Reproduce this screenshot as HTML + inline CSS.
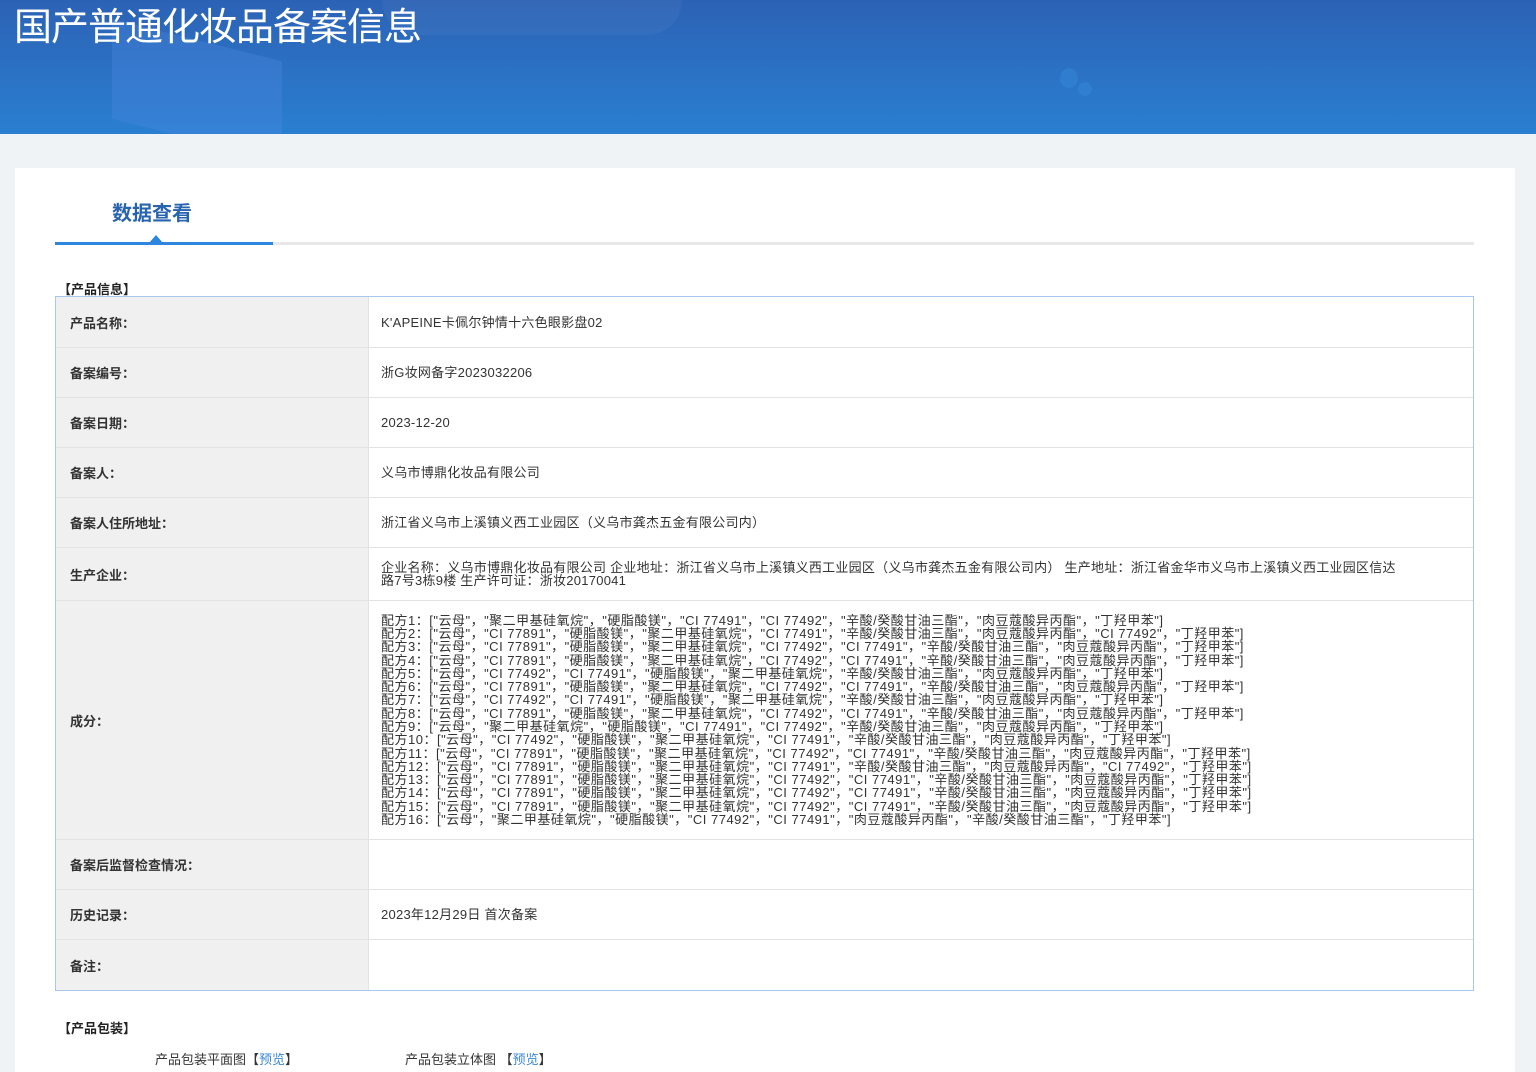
<!DOCTYPE html>
<html><head><meta charset="utf-8"><style>
*{margin:0;padding:0;box-sizing:border-box}
body{width:1536px;height:1072px;overflow:hidden;background:#eff3f6;font-family:"Liberation Sans","Noto Sans CJK SC",sans-serif;color:#333;position:relative}
.hdr{position:absolute;left:0;top:0;width:1536px;height:134px;background:linear-gradient(180deg,#2c62b5,#2a7fd1);overflow:hidden}
.hdr .s1{position:absolute;left:112px;top:40px;width:170px;height:100px;background:rgba(80,140,230,.3);transform:skewY(14deg)}
.hdr .c1{position:absolute;left:382px;top:0;width:300px;height:35px;border-radius:0 0 80px 80px;background:rgba(255,255,255,.04)}
.hdr .b1{position:absolute;left:1060px;top:68px;width:18px;height:20px;border-radius:50%;background:rgba(60,150,230,.3)}
.hdr .b2{position:absolute;left:1078px;top:82px;width:14px;height:14px;border-radius:50%;background:rgba(60,150,230,.3)}
.hdr h1{position:absolute;left:14px;top:-4px;font-size:38px;font-weight:normal;color:#fff;letter-spacing:-1px}
.panel{position:absolute;left:15px;top:168px;width:1500px;height:904px;background:#fff}
.tab{position:absolute;left:112px;top:197px;font-size:20px;font-weight:bold;color:#2864ae}
.line{position:absolute;left:55px;top:242px;width:1419px;height:3px;background:#e8e8e8}
.line2{position:absolute;left:55px;top:242px;width:218px;height:3px;background:#2e86de}
.tri{position:absolute;left:149px;top:235px;width:0;height:0;border-left:7px solid transparent;border-right:7px solid transparent;border-bottom:8px solid #2e86de}
.sec{position:absolute;font-size:13px;font-weight:bold;color:#222}
.tbl{position:absolute;left:55px;top:296px;width:1419px;height:695px;border:1px solid #a9c6ec;background:#fff}
.row{position:absolute;left:0;width:1417px;border-bottom:1px solid #e3e3e3;font-size:13px}
.lab{position:absolute;left:0;top:0;bottom:0;width:313px;background:#f0f0f0;border-right:1px solid #e3e3e3;font-weight:bold;color:#333;display:flex;align-items:center;padding-left:14px}
.val{position:absolute;left:325px;right:66px;top:0;bottom:0;display:flex;align-items:center;color:#333;line-height:13px;letter-spacing:0.25px}
.ing{font-size:13px;line-height:13.3px;white-space:nowrap;letter-spacing:0.5px}
.pk{position:absolute;top:1049px;font-size:13px;color:#333}
.pk b{font-weight:normal;color:#3a87d8}
</style></head><body>
<div class="hdr"><div class="s1"></div><div class="c1"></div><div class="b1"></div><div class="b2"></div><h1>国产普通化妆品备案信息</h1></div>
<div class="panel"></div>
<div class="tab">数据查看</div>
<div class="line"></div><div class="line2"></div><div class="tri"></div>
<div class="sec" style="left:58px;top:279px">【产品信息】</div>
<div class="tbl">
<div class="row" style="top:0;height:51px"><div class="lab">产品名称：</div><div class="val">K'APEINE卡佩尔钟情十六色眼影盘02</div></div>
<div class="row" style="top:51px;height:50px"><div class="lab">备案编号：</div><div class="val">浙G妆网备字2023032206</div></div>
<div class="row" style="top:101px;height:50px"><div class="lab">备案日期：</div><div class="val">2023-12-20</div></div>
<div class="row" style="top:151px;height:50px"><div class="lab">备案人：</div><div class="val">义乌市博鼎化妆品有限公司</div></div>
<div class="row" style="top:201px;height:50px"><div class="lab">备案人住所地址：</div><div class="val">浙江省义乌市上溪镇义西工业园区（义乌市龚杰五金有限公司内）</div></div>
<div class="row" style="top:251px;height:53px"><div class="lab">生产企业：</div><div class="val">企业名称：义乌市博鼎化妆品有限公司 企业地址：浙江省义乌市上溪镇义西工业园区（义乌市龚杰五金有限公司内） 生产地址：浙江省金华市义乌市上溪镇义西工业园区信达路7号3栋9楼 生产许可证：浙妆20170041</div></div>
<div class="row" style="top:304px;height:239px"><div class="lab">成分：</div><div class="val"><div class="ing">
配方1：["云母"，"聚二甲基硅氧烷"，"硬脂酸镁"，"CI 77491"，"CI 77492"，"辛酸/癸酸甘油三酯"，"肉豆蔻酸异丙酯"，"丁羟甲苯"]<br>
配方2：["云母"，"CI 77891"，"硬脂酸镁"，"聚二甲基硅氧烷"，"CI 77491"，"辛酸/癸酸甘油三酯"，"肉豆蔻酸异丙酯"，"CI 77492"，"丁羟甲苯"]<br>
配方3：["云母"，"CI 77891"，"硬脂酸镁"，"聚二甲基硅氧烷"，"CI 77492"，"CI 77491"，"辛酸/癸酸甘油三酯"，"肉豆蔻酸异丙酯"，"丁羟甲苯"]<br>
配方4：["云母"，"CI 77891"，"硬脂酸镁"，"聚二甲基硅氧烷"，"CI 77492"，"CI 77491"，"辛酸/癸酸甘油三酯"，"肉豆蔻酸异丙酯"，"丁羟甲苯"]<br>
配方5：["云母"，"CI 77492"，"CI 77491"，"硬脂酸镁"，"聚二甲基硅氧烷"，"辛酸/癸酸甘油三酯"，"肉豆蔻酸异丙酯"，"丁羟甲苯"]<br>
配方6：["云母"，"CI 77891"，"硬脂酸镁"，"聚二甲基硅氧烷"，"CI 77492"，"CI 77491"，"辛酸/癸酸甘油三酯"，"肉豆蔻酸异丙酯"，"丁羟甲苯"]<br>
配方7：["云母"，"CI 77492"，"CI 77491"，"硬脂酸镁"，"聚二甲基硅氧烷"，"辛酸/癸酸甘油三酯"，"肉豆蔻酸异丙酯"，"丁羟甲苯"]<br>
配方8：["云母"，"CI 77891"，"硬脂酸镁"，"聚二甲基硅氧烷"，"CI 77492"，"CI 77491"，"辛酸/癸酸甘油三酯"，"肉豆蔻酸异丙酯"，"丁羟甲苯"]<br>
配方9：["云母"，"聚二甲基硅氧烷"，"硬脂酸镁"，"CI 77491"，"CI 77492"，"辛酸/癸酸甘油三酯"，"肉豆蔻酸异丙酯"，"丁羟甲苯"]<br>
配方10：["云母"，"CI 77492"，"硬脂酸镁"，"聚二甲基硅氧烷"，"CI 77491"，"辛酸/癸酸甘油三酯"，"肉豆蔻酸异丙酯"，"丁羟甲苯"]<br>
配方11：["云母"，"CI 77891"，"硬脂酸镁"，"聚二甲基硅氧烷"，"CI 77492"，"CI 77491"，"辛酸/癸酸甘油三酯"，"肉豆蔻酸异丙酯"，"丁羟甲苯"]<br>
配方12：["云母"，"CI 77891"，"硬脂酸镁"，"聚二甲基硅氧烷"，"CI 77491"，"辛酸/癸酸甘油三酯"，"肉豆蔻酸异丙酯"，"CI 77492"，"丁羟甲苯"]<br>
配方13：["云母"，"CI 77891"，"硬脂酸镁"，"聚二甲基硅氧烷"，"CI 77492"，"CI 77491"，"辛酸/癸酸甘油三酯"，"肉豆蔻酸异丙酯"，"丁羟甲苯"]<br>
配方14：["云母"，"CI 77891"，"硬脂酸镁"，"聚二甲基硅氧烷"，"CI 77492"，"CI 77491"，"辛酸/癸酸甘油三酯"，"肉豆蔻酸异丙酯"，"丁羟甲苯"]<br>
配方15：["云母"，"CI 77891"，"硬脂酸镁"，"聚二甲基硅氧烷"，"CI 77492"，"CI 77491"，"辛酸/癸酸甘油三酯"，"肉豆蔻酸异丙酯"，"丁羟甲苯"]<br>
配方16：["云母"，"聚二甲基硅氧烷"，"硬脂酸镁"，"CI 77492"，"CI 77491"，"肉豆蔻酸异丙酯"，"辛酸/癸酸甘油三酯"，"丁羟甲苯"]
</div></div></div>
<div class="row" style="top:543px;height:50px"><div class="lab">备案后监督检查情况：</div><div class="val"></div></div>
<div class="row" style="top:593px;height:50px"><div class="lab">历史记录：</div><div class="val">2023年12月29日 首次备案</div></div>
<div class="row" style="top:643px;height:50px;border-bottom:none"><div class="lab">备注：</div><div class="val"></div></div>
</div>
<div class="sec" style="left:58px;top:1018px">【产品包装】</div>
<div class="pk" style="left:155px">产品包装平面图【<b>预览</b>】</div>
<div class="pk" style="left:405px">产品包装立体图 【<b>预览</b>】</div>
</body></html>
